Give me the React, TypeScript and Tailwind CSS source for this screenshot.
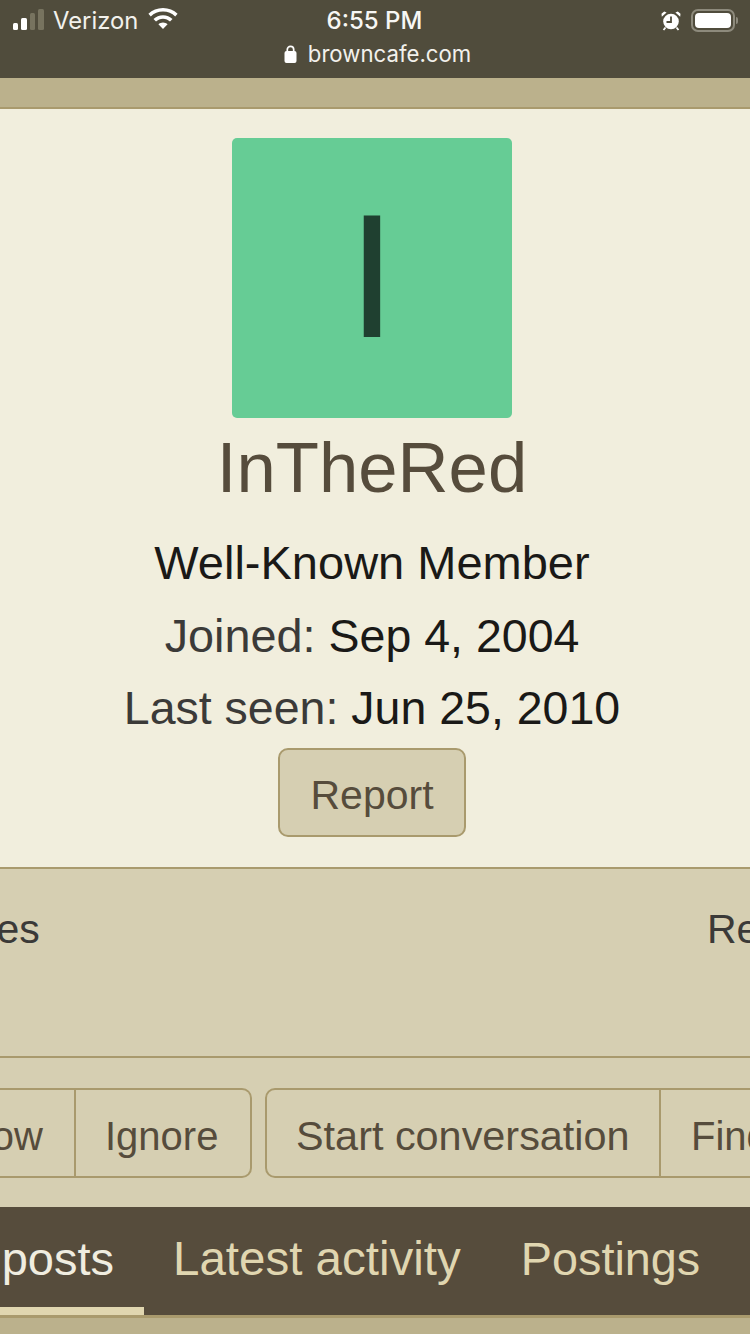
import React from 'react';

function StatusBar() {
  return (
    <div className="h-[78px] shrink-0 bg-[#504c3c] text-white flex flex-col" style={{ fontFamily: 'Inter, "Liberation Sans", sans-serif' }}>
      <div className="h-[41px] pt-[1px] flex items-center justify-between pl-[13px] pr-[12px]">
        <div className="flex items-center w-[200px]">
          <div className="flex items-end gap-[3px] h-[21px] -mt-[2px]">
            <span className="w-[5px] h-[7px] rounded-[1.5px] bg-white" />
            <span className="w-[6px] h-[12px] rounded-[1.5px] bg-white" />
            <span className="w-[5px] h-[17px] rounded-[1.5px] bg-[#77735f]" />
            <span className="w-[6px] h-[21px] rounded-[1.5px] bg-[#77735f]" />
          </div>
          <span className="ml-[9px] text-[23.800px] leading-none text-[#f2f1ec]">Verizon</span>
          <svg className="ml-[10px] -mt-[3px]" width="30" height="22" viewBox="0 0 30 22" fill="white">
            <path d="M15 0C9.300 0 4.200 2.200.4 5.800l2.400 2.600C6 5.400 10.300 3.500 15 3.500s9 1.900 12.200 4.900l2.400-2.600C25.800 2.200 20.700 0 15 0z" />
            <path d="M15 7.200c-3.700 0-7 1.400-9.500 3.700l2.500 2.600c1.800-1.700 4.300-2.800 7-2.800s5.200 1.100 7 2.800l2.500-2.600C22 8.600 18.700 7.200 15 7.200z" />
            <path d="M15 14.500c-1.800 0-3.400.7-4.600 1.800L15 21l4.600-4.700c-1.200-1.100-2.800-1.800-4.600-1.800z" />
          </svg>
        </div>
        <span className="text-[24px] leading-none font-medium text-[#f7f7f4] -ml-[2px]">6:55 PM</span>
        <div className="flex items-center justify-end w-[200px] -mt-[1px]">
          <svg width="20" height="20" viewBox="0 0 20 20">
            <path d="M.8 5.800 5.600 1.600 3.200.5.500 2.800zM19.200 5.800 14.400 1.600 16.800.5l2.700 2.300z" fill="white" />
            <circle cx="10" cy="10.500" r="7.800" fill="white" />
            <path d="M10 5.500v5.500H5.500" fill="none" stroke="#504c3c" strokeWidth="1.800" />
            <path d="M4.500 16.500 2.500 19M15.500 16.500l2 2.500" stroke="white" strokeWidth="1.800" />
          </svg>
          <div className="ml-[10px] w-[44px] h-[23px] rounded-[7px] border-2 border-[#8d8a7c] p-[2px]">
            <div className="w-full h-full rounded-[4px] bg-white" />
          </div>
          <span className="ml-[1px] w-[2px] h-[7px] rounded-r-[2px] bg-[#8d8a7c]" />
        </div>
      </div>
      <div className="flex items-center justify-center gap-[11px] h-[28px] -mt-[1px] ml-[5px]">
        <svg width="13" height="18" viewBox="0 0 13 18" fill="white">
          <path d="M3.300 6V4.500a3.200 3.200 0 0 1 6.400 0V6" fill="none" stroke="white" strokeWidth="1.700" />
          <rect x="0.500" y="6" width="12" height="12" rx="2" />
        </svg>
        <span className="text-[22.200px] leading-none text-[#f2f1ec]">browncafe.com</span>
      </div>
    </div>
  );
}

function Profile() {
  return (
    <div className="h-[762px] shrink-0 bg-[#f1eedd] border-y-2 border-[#a99a6d] flex flex-col items-center pt-[29px] pr-[6px]">
      <div className="w-[280px] h-[280px] rounded-[5px] bg-[#66cc95] flex items-center justify-center pb-[5px]">
        <span className="text-[176px] leading-none text-[#1f4030]">I</span>
      </div>
      <h1 className="mt-[6px] text-[70.700px] leading-[88px] font-normal text-[#564c3c]">InTheRed</h1>
      <p className="mt-[26px] text-[47px] leading-[50px] text-[#1a1917]">Well-Known Member</p>
      <p className="mt-[22px] text-[46.800px] leading-[52px] text-[#3b3a38]">
        Joined: <span className="text-[46.500px] text-[#1a1917]">Sep 4, 2004</span>
      </p>
      <p className="mt-[20px] text-[46.500px] leading-[52px] text-[#3b3a38]">
        Last seen: <span className="text-[#1a1917]">Jun 25, 2010</span>
      </p>
      <button className="mt-[14px] w-[188px] h-[89px] pt-[7px] rounded-[10px] border-2 border-[#a99a6d] bg-[#d6cfb2] text-[41px] text-[#564c3c]">
        Report
      </button>
    </div>
  );
}

function ActionButton({ label, className }: { label: string; className: string }) {
  return (
    <button className={`h-[90px] pt-[6px] shrink-0 border-2 border-[#a99a6d] bg-[#d6cfb2] text-[#564c3c] whitespace-nowrap ${className}`}>
      {label}
    </button>
  );
}

export default function App() {
  return (
    <div
      className="w-[750px] h-[1334px] overflow-hidden flex flex-col bg-[#bbb18c]"
      style={{ fontFamily: '"Liberation Sans", Arial, sans-serif' }}
    >
      <StatusBar />
      <div className="h-[29px] shrink-0 bg-[#bbb18c]" />
      <Profile />

      {/* stats */}
      <div className="h-[189px] shrink-0 bg-[#d6cfb2] border-b-2 border-[#a99a6d] overflow-hidden">
        <div className="flex justify-between pt-[36px] ml-[-147px] mr-[-48px] text-[41px] leading-[48px] text-[#3b3a38]">
          <span>Messages</span>
          <span className="w-[91px] overflow-hidden">Reactions</span>
        </div>
      </div>

      {/* buttons */}
      <div className="h-[149px] shrink-0 bg-[#d6cfb2] pt-[30px] flex items-start overflow-hidden">
        <ActionButton label="Follow" className="w-[180px] ml-[-104px] text-right text-[40px] pr-[31px] border-l-0" />
        <ActionButton label="Ignore" className="w-[176px] text-left text-[40px] pl-[29px] border-l-0 rounded-r-[10px]" />
        <ActionButton label="Start conversation" className="w-[396px] ml-[13px] text-left text-[41.400px] pl-[29px] rounded-l-[10px]" />
        <ActionButton label="Find" className="w-[120px] text-left text-[40px] pl-[30px] border-l-0 border-r-0" />
      </div>

      {/* tabs */}
      <div className="h-[108px] shrink-0 bg-[#564c3c] flex items-stretch overflow-hidden text-[47.500px] text-[#e0d6b0]">
        <div className="w-[144px] shrink-0 flex items-center justify-end pr-[30px] border-b-[8px] border-[#e0d6b0] text-[#f0ede0]">
          <span className="pt-[4px] whitespace-nowrap text-[47px]">posts</span>
        </div>
        <span className="ml-[29px] mt-[16px] whitespace-nowrap">Latest activity</span>
        <span className="ml-[60px] mt-[17px] whitespace-nowrap text-[46.800px]">Postings</span>
      </div>
      <div className="h-[3px] shrink-0 bg-[#a99a6d]" />
    </div>
  );
}
